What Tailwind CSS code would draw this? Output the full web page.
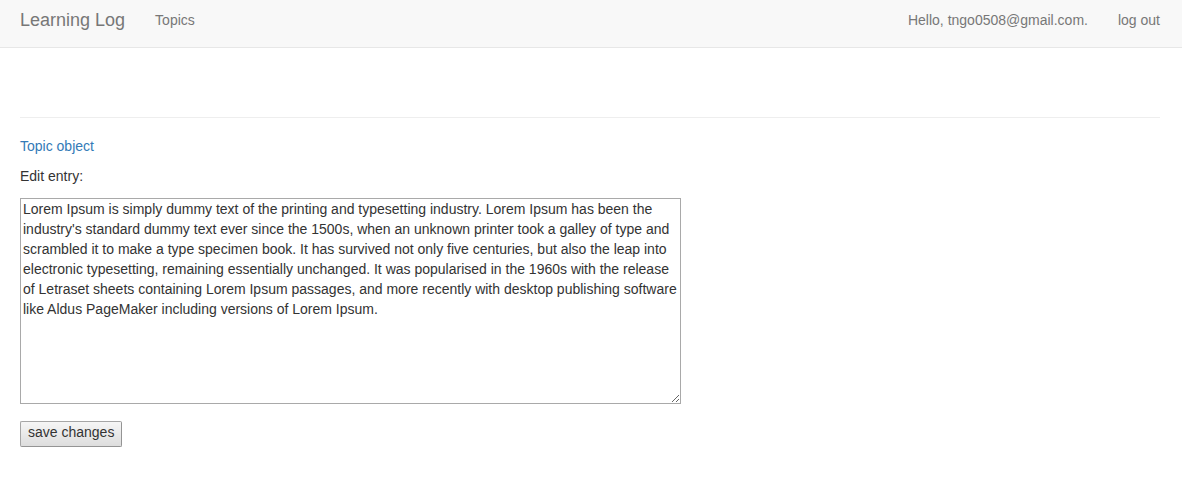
<!DOCTYPE html>
<html lang="en">
<head>
<meta charset="utf-8">
<meta name="viewport" content="width=device-width, initial-scale=1">
<title>Learning Log</title>
<script src="https://cdn.jsdelivr.net/npm/@tailwindcss/browser@4"></script>
</head>
<body class="bg-white font-['Liberation_Sans',Arial,sans-serif] text-[14px] leading-5 text-[#333333]">
<nav class="flex h-12 items-start justify-between border-b border-[#e7e7e7] bg-[#f8f8f8] px-5 pt-[10px] text-[#777777]">
  <div class="flex gap-[30px]">
    <a href="#" class="text-[18px]">Learning Log</a>
    <a href="#">Topics</a>
  </div>
  <div class="flex gap-[30px] pr-[2px]">
    <span>Hello, tngo0508@gmail.com.</span>
    <a href="#">log out</a>
  </div>
</nav>
<main class="pl-5 pt-[69px] pr-[22px]">
  <hr class="mb-[18px] border-[#eeeeee]">
  <p class="mb-[10px]"><a href="#" class="text-[#337ab7]">Topic object</a></p>
  <form class="flex flex-col items-start">
    <label for="entry" class="mb-3">Edit entry:</label>
    <textarea id="entry" cols="80" class="mb-[17px] h-[206px] w-[661px] max-w-full resize border border-[#a9a9a9] bg-white p-[2px] pt-0">Lorem Ipsum is simply dummy text of the printing and typesetting industry. Lorem Ipsum has been the industry's standard dummy text ever since the 1500s, when an unknown printer took a galley of type and scrambled it to make a type specimen book. It has survived not only five centuries, but also the leap into electronic typesetting, remaining essentially unchanged. It was popularised in the 1960s with the release of Letraset sheets containing Lorem Ipsum passages, and more recently with desktop publishing software like Aldus PageMaker including versions of Lorem Ipsum.</textarea>
    <button type="button" class="rounded-[2px] border border-t-[#a6a6a6] border-r-[#949494] border-b-[#949494] border-l-[#a6a6a6] bg-linear-to-b from-[#f6f6f6] to-[#dddddd] px-[7px] pb-1">save changes</button>
  </form>
</main>
</body>
</html>
